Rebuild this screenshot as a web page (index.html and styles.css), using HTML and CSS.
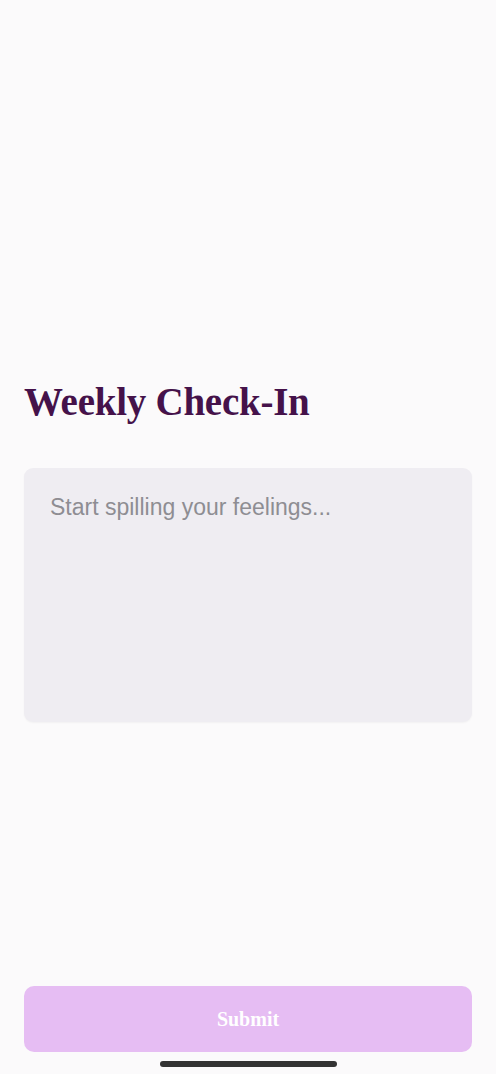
FILE: index.html
```html
<!DOCTYPE html>
<html>
<head>
<meta charset="utf-8">
<link rel="stylesheet" href="styles.css">
</head>
<body>
<div class="screen">
  <main class="content">
    <h1 class="title">Weekly Check-In</h1>
    <div class="entry">
      <span class="placeholder">Start spilling your feelings...</span>
    </div>
  </main>
  <footer class="footer">
    <button class="submit">Submit</button>
    <div class="home-bar"></div>
  </footer>
</div>
</body>
</html>
```

FILE: styles.css
```css
html, body {
  margin: 0;
  padding: 0;
  background: #fbfafb;
}
.screen {
  width: 496px;
  height: 1074px;
  display: flex;
  flex-direction: column;
  box-sizing: border-box;
  padding: 0 24px;
}
.content {
  padding-top: 378px;
  flex: 1;
}
.title {
  margin: 0;
  font-family: "Liberation Serif", serif;
  font-weight: 700;
  font-size: 39px;
  line-height: 48px;
  color: #45124a;
  letter-spacing: -0.25px;
}
.entry {
  margin-top: 42px;
  height: 254px;
  background: #efedf2;
  border-radius: 9px;
  box-shadow: 0 1px 2px rgba(0,0,0,0.04);
  box-sizing: border-box;
  padding: 25px 26px;
}
.placeholder {
  display: block;
  font-family: "Liberation Sans", sans-serif;
  font-size: 23px;
  line-height: 28px;
  color: #8e8d93;
}
.footer {
  display: flex;
  flex-direction: column;
  align-items: center;
  padding-bottom: 7px;
}
.submit {
  width: 100%;
  height: 66px;
  border: none;
  border-radius: 10px;
  background: #e6bdf3;
  color: #ffffff;
  font-family: "Liberation Serif", serif;
  font-weight: 700;
  font-size: 20px;
}
.home-bar {
  margin-top: 9px;
  width: 177px;
  height: 6px;
  border-radius: 3px;
  background: #333333;
}
```
